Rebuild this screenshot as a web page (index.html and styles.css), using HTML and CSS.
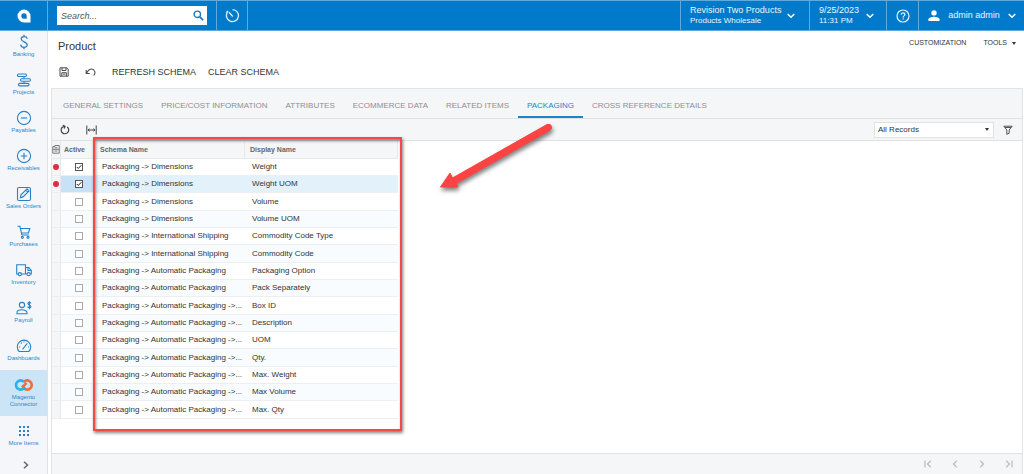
FILE: index.html
```html
<!DOCTYPE html>
<html lang="en">
<head>
<meta charset="utf-8">
<title>Product</title>
<link rel="stylesheet" href="styles.css">
</head>
<body>
<div class="app">
  <header class="topbar">
    <a class="brand" href="#" aria-label="Home"><svg width="14" height="14" viewBox="0 0 14 14"><path fill="#fff" fill-rule="evenodd" d="M7 .5a6.500 6.500 0 0 1 6.500 6.500v6.500H7A6.500 6.500 0 0 1 7 .5zM7 4.300a2.700 2.700 0 1 0 0 5.400h2.700V7A2.700 2.700 0 0 0 7 4.300z"/></svg></a>
    <div class="search-area">
      <label class="search"><input type="text" placeholder="Search..." aria-label="Search"><svg width="11" height="11" viewBox="0 0 11 11" fill="none" stroke="#1479c8"><circle cx="4.300" cy="4.300" r="3.200" stroke-width="1.400"/><path d="M6.800 6.800l3.300 3.300" stroke-width="1.700"/></svg></label>
    </div>
    <button class="history" aria-label="History"><svg width="15" height="15" viewBox="0 0 15 15" fill="none" stroke="#d9f0ff" stroke-width="1.300"><path d="M7.500 1.600A6 6 0 1 1 2.500 4.200M7.800 8.500L4 4.300M1.200 4.600l2-1.600"/></svg></button>
    <button class="tenant"><span class="lines"><span class="big">Revision Two Products</span><span class="small">Products Wholesale</span></span><svg class="chev" width="8" height="6" viewBox="0 0 8 6"><path d="M.7 1l3.300 3.300L7.300 1"/></svg></button>
    <button class="date"><span class="lines"><span class="big">9/25/2023</span><span class="small">11:31 PM</span></span><svg class="chev" width="8" height="6" viewBox="0 0 8 6"><path d="M.7 1l3.300 3.300L7.300 1"/></svg></button>
    <button class="help" aria-label="Help"><svg width="14" height="14" viewBox="0 0 14 14" fill="none" stroke="#e8f6ff" stroke-width="1.200"><circle cx="7" cy="7" r="6"/><path d="M5.200 5.700c0-2.500 3.700-2.400 3.700-.2 0 1.400-1.800 1.400-1.800 2.900M7.100 9.300v1.300"/></svg></button>
    <button class="user"><svg width="12" height="11" viewBox="0 0 12 11" fill="#fff"><circle cx="6" cy="2.900" r="2.700"/><path d="M.4 11V9.500C.4 7.500 4 6.700 6 6.700s5.600.8 5.600 2.800V11z"/></svg><span class="big">admin admin</span><svg class="chev" width="8" height="6" viewBox="0 0 8 6"><path d="M.7 1l3.300 3.300L7.300 1"/></svg></button>
  </header>
  <div class="body">
    <nav class="sidebar">
      <a href="#"><svg viewBox="0 0 16 16"><path d="M11 4.700C11 1.800 5.200 1.800 5.200 4.900c0 3.200 6 2.600 6 6 0 3.300-6.400 3.200-6.400-.1M8 .8v2M8 13.300v2" stroke-width="1.300"/></svg>Banking</a>
      <a href="#"><svg viewBox="0 0 16 16"><rect x="1.500" y="2" width="9" height="2.500" rx="1.200"/><rect x="4.500" y="6.700" width="10" height="2.500" rx="1.200"/><rect x="2.500" y="11.400" width="10.500" height="2.500" rx="1.200"/><path d="M8 4.500v2.200M8 9.200v2.200"/></svg>Projects</a>
      <a href="#"><svg viewBox="0 0 16 16"><circle cx="8" cy="8" r="6.600"/><path d="M4.800 8h6.400"/></svg>Payables</a>
      <a href="#"><svg viewBox="0 0 16 16"><circle cx="8" cy="8" r="6.600"/><path d="M4.800 8h6.400M8 4.800v6.400"/></svg>Receivables</a>
      <a href="#"><svg viewBox="0 0 16 16"><rect x="1.500" y="1.500" width="13" height="13" rx="1.500"/><path d="M4.300 11.700l.7-2.800 6-6 2 2-6 6zM9.700 4.200l2 2"/></svg>Sales Orders</a>
      <a href="#"><svg viewBox="0 0 16 16"><path d="M1.500 2.300h2.400l2 8.700h7M4.500 4.500h9.300l-1.400 4.500H5.500"/><circle cx="6.400" cy="13.200" r="1"/><circle cx="12" cy="13.200" r="1"/></svg>Purchases</a>
      <a href="#"><svg viewBox="0 0 16 16"><path d="M2.200 12H.7V2.800h8.800V12H5.600M9.500 5.500h3.300l2.500 3V12h-1M9.500 12h1.300M12 5.700v2.800h3"/><circle cx="3.900" cy="12.200" r="1.600"/><circle cx="12.600" cy="12.200" r="1.600"/></svg>Inventory</a>
      <a href="#"><svg viewBox="0 0 16 16"><circle cx="6" cy="5" r="2.600"/><path d="M1 13.700v-1.200C1 10.600 3.800 9.800 6 9.800s5 .8 5 2.700v1.200zM14.800 3.500c0-1.500-2.900-1.500-2.900.1 0 1.700 3 1.100 3 3 0 1.600-3.200 1.600-3.200-.1M13.400 1.300v7.900"/></svg>Payroll</a>
      <a href="#" class="last"><svg viewBox="0 0 16 16"><path d="M3.200 13.500A6.700 6.700 0 1 1 12.800 13.500z"/><path d="M6.500 11.300l4.800-6M3 9h1.200M5 4.700l.8.800M8 3.400v1.200M12 9h1"/></svg>Dashboards</a>
      <a href="#" class="current"><svg class="loops" viewBox="0 0 20 14"><path stroke="#f26b3a" d="M9.500 9.600l1.600 1.500a4.600 4.600 0 1 0 0-8.200L9.800 4.100"/><path stroke="#25b5e8" d="M10 4L8.900 3A4.600 4.600 0 1 0 8.900 11L11 9"/><path stroke="#f26b3a" d="M8 9.500l4.500-4.700"/></svg>Magento<br>Connector</a>
      <a href="#" class="more"><svg viewBox="0 0 16 16"><path stroke-width="2" d="M3 4h2M7 4h2M11 4h2M3 8h2M7 8h2M11 8h2M3 12h2M7 12h2M11 12h2"/></svg>More Items</a>
      <button class="expand" aria-label="Expand menu"><svg width="6" height="8" viewBox="0 0 6 8"><path d="M1 .8L4.500 4 1 7.200"/></svg></button>
    </nav>
    <main class="content">
      <div class="title-row"><h1>Product</h1><div class="links"><button>CUSTOMIZATION</button><button>TOOLS<span class="caret"></span></button></div></div>
      <div class="actions">
        <div class="icons">
          <button aria-label="Save"><svg width="10" height="10" viewBox="0 0 10 10" fill="none" stroke="#4c4c4c"><path d="M1 .8h6.800L9.200 2v7.200H1zM3 .8v2.700h4V.8M2.800 9V5.700h4.600V9M4 7.200h2.300"/></svg></button>
          <button aria-label="Undo"><svg width="11" height="10" viewBox="0 0 11 10" fill="none" stroke="#4c4c4c" stroke-width="1.100"><path d="M1.200 3v3.500h3.600M1.500 6.200C3.500 2.600 5 2 6.500 2 9.800 2 11 6 8.700 8.500"/></svg></button>
        </div>
        <button>REFRESH SCHEMA</button>
        <button>CLEAR SCHEMA</button>
      </div>
      <section class="panel">
        <div class="tabs" role="tablist">
          <button role="tab">GENERAL SETTINGS</button><button role="tab">PRICE/COST INFORMATION</button><button role="tab">ATTRIBUTES</button><button role="tab">ECOMMERCE DATA</button><button role="tab">RELATED ITEMS</button><button role="tab" class="selected" aria-selected="true">PACKAGING</button><button role="tab">CROSS REFERENCE DETAILS</button>
        </div>
        <div class="toolbar">
          <button aria-label="Refresh"><svg width="10" height="11" viewBox="0 0 10 11" fill="none" stroke="#444" stroke-width="1.200"><path d="M7.200 2.900A3.800 3.800 0 1 1 2.300 3.200L4.800 2.200M2.800 1.200l2.200 1-.8 2.300"/></svg></button>
          <button aria-label="Fit to width"><svg width="11" height="10" viewBox="0 0 11 10" fill="none" stroke="#444"><path d="M.8.500v9M10.200.500v9M2 5h7M3.500 3.600L2 5l1.500 1.400M7.500 3.600L9 5 7.500 6.400"/></svg></button>
          <div class="select"><select aria-label="Filter"><option>All Records</option></select><span class="caret"></span></div>
          <button aria-label="Filter settings"><svg width="10" height="10" viewBox="0 0 10 10" fill="none" stroke="#555"><path d="M.8 1.200h8.400L6.200 5v3.300l-2.400 1V5zM2 2.500h6"/></svg></button>
        </div>
        <div class="grid">
          <table>
            <colgroup><col class="c-note"><col class="c-active"><col class="c-name"><col class="c-display"></colgroup>
            <thead><tr><th class="note" aria-label="Notes"><svg width="8" height="9" viewBox="0 0 8 9" fill="none" stroke="#777"><path d="M.8 8.200V1.500h2v-1h4.400v7.700zM.8 4.300h6.400M2.500 2.700h3M2.500 6h3"/></svg></th><th class="act">Active</th><th>Schema Name</th><th>Display Name</th></tr></thead>
            <tbody>
              <tr><td class="note"><i class="dot"></i></td><td class="act"><input type="checkbox" checked aria-label="Weight"></td><td>Packaging -&gt; Dimensions</td><td>Weight</td></tr>
              <tr class="active"><td class="note"><i class="dot"></i></td><td class="act"><input type="checkbox" checked aria-label="Weight UOM"></td><td>Packaging -&gt; Dimensions</td><td>Weight UOM</td></tr>
              <tr><td class="note"></td><td class="act"><input type="checkbox" aria-label="Volume"></td><td>Packaging -&gt; Dimensions</td><td>Volume</td></tr>
              <tr><td class="note"></td><td class="act"><input type="checkbox" aria-label="Volume UOM"></td><td>Packaging -&gt; Dimensions</td><td>Volume UOM</td></tr>
              <tr><td class="note"></td><td class="act"><input type="checkbox" aria-label="Commodity Code Type"></td><td>Packaging -&gt; International Shipping</td><td>Commodity Code Type</td></tr>
              <tr><td class="note"></td><td class="act"><input type="checkbox" aria-label="Commodity Code"></td><td>Packaging -&gt; International Shipping</td><td>Commodity Code</td></tr>
              <tr><td class="note"></td><td class="act"><input type="checkbox" aria-label="Packaging Option"></td><td>Packaging -&gt; Automatic Packaging</td><td>Packaging Option</td></tr>
              <tr><td class="note"></td><td class="act"><input type="checkbox" aria-label="Pack Separately"></td><td>Packaging -&gt; Automatic Packaging</td><td>Pack Separately</td></tr>
              <tr><td class="note"></td><td class="act"><input type="checkbox" aria-label="Box ID"></td><td>Packaging -&gt; Automatic Packaging -&gt;...</td><td>Box ID</td></tr>
              <tr><td class="note"></td><td class="act"><input type="checkbox" aria-label="Description"></td><td>Packaging -&gt; Automatic Packaging -&gt;...</td><td>Description</td></tr>
              <tr><td class="note"></td><td class="act"><input type="checkbox" aria-label="UOM"></td><td>Packaging -&gt; Automatic Packaging -&gt;...</td><td>UOM</td></tr>
              <tr><td class="note"></td><td class="act"><input type="checkbox" aria-label="Qty."></td><td>Packaging -&gt; Automatic Packaging -&gt;...</td><td>Qty.</td></tr>
              <tr><td class="note"></td><td class="act"><input type="checkbox" aria-label="Max. Weight"></td><td>Packaging -&gt; Automatic Packaging -&gt;...</td><td>Max. Weight</td></tr>
              <tr><td class="note"></td><td class="act"><input type="checkbox" aria-label="Max Volume"></td><td>Packaging -&gt; Automatic Packaging -&gt;...</td><td>Max Volume</td></tr>
              <tr><td class="note"></td><td class="act"><input type="checkbox" aria-label="Max. Qty"></td><td>Packaging -&gt; Automatic Packaging -&gt;...</td><td>Max. Qty</td></tr>
            </tbody>
          </table>
          <div class="callout"></div>
          <svg class="arrow" width="130" height="80" viewBox="0 0 130 80"><path fill="#fb4343" stroke="#fb4343" stroke-width="1" stroke-linejoin="round" d="M9.500 66L19 52l2.500 5L116 3.500q4-1 4.500 2t-2 4L25 62.500l2 3.500z"/></svg>
        </div>
        <footer class="pager">
          <button aria-label="First page"><svg width="8" height="8" viewBox="0 0 8 8"><path d="M1 .5v7M6.800.8L3.500 4l3.300 3.200"/></svg></button>
          <button aria-label="Previous page"><svg width="8" height="8" viewBox="0 0 8 8"><path d="M5.700.8L2.400 4l3.300 3.200"/></svg></button>
          <button aria-label="Next page"><svg width="8" height="8" viewBox="0 0 8 8"><path d="M2.300.8L5.600 4 2.300 7.200"/></svg></button>
          <button aria-label="Last page"><svg width="8" height="8" viewBox="0 0 8 8"><path d="M7 .5v7M1.200.8L4.500 4 1.200 7.200"/></svg></button>
        </footer>
      </section>
    </main>
  </div>
</div>
</body>
</html>
```

FILE: styles.css
```css
* { box-sizing: border-box; }
body { margin: 0; font: 8px/12px "Liberation Sans", Arial, sans-serif; color: #333; background: #fff; }
button, select, input { font: inherit; color: inherit; margin: 0; }
button { border: 0; padding: 0; background: none; white-space: nowrap; cursor: pointer; }
a { text-decoration: none; }
svg { display: block; flex: none; }
.app { display: flex; flex-direction: column; min-height: 100vh; }

.topbar { display: flex; height: 31px; background: #027acc; border-top: 1px solid #5eabdf; border-bottom: 1px solid #5eabdf; color: #e8f6ff; }
.brand { display: flex; align-items: center; justify-content: center; width: 48px; border-right: 1px solid #5eabdf; }
.search-area { display: flex; align-items: center; flex: none; width: 169px; padding-left: 9px; border-right: 1px solid #5eabdf; }
.search { display: flex; align-items: center; width: 150px; height: 19px; padding: 0 3px 0 4px; background: #fff; }
.search input { flex: 1; min-width: 0; padding: 0; border: 0; outline: 0; background: none; font-size: 9px; color: #333; }
.search input::placeholder { color: #555; font-style: italic; opacity: 1; }
.history { display: flex; align-items: center; justify-content: center; width: 31px; border-right: 1px solid #5eabdf; }
.tenant, .date, .help, .user { display: flex; align-items: center; border-left: 1px solid #5eabdf; }
.tenant { width: 129px; margin-left: auto; padding: 0 14px 0 9px; justify-content: space-between; text-align: left; }
.date { width: 77px; padding: 0 12px 0 9px; justify-content: space-between; text-align: left; }
.help { width: 32px; justify-content: center; }
.user { width: 106px; padding: 0 8px 0 9px; justify-content: space-between; }
.lines { display: flex; flex-direction: column; }
.big { font-size: 9px; line-height: 11px; }
.small { font-size: 8px; line-height: 10px; }
.chev { fill: none; stroke: #fff; stroke-width: 1.5; }

.body { display: flex; flex: 1; }
.sidebar { display: flex; flex-direction: column; flex: none; width: 48px; padding-top: 1px; background: #f4f6f9; border-right: 1px solid #dfe3e7; }
.sidebar a { display: flex; flex-direction: column; align-items: center; height: 38px; padding-top: 2px; font-size: 6px; line-height: 7px; text-align: center; color: #2688cf; }
.sidebar svg { width: 16px; height: 16px; margin-bottom: 1px; fill: none; stroke: #2681c8; stroke-width: 1.1; }
.sidebar .last { height: 34px; }
.sidebar .current { height: 46px; padding-top: 8px; background: #cbe5f6; }
.sidebar .loops { width: 20px; height: 14px; margin-bottom: 2px; stroke-width: 2.6; }
.sidebar .more { padding-top: 7px; }
.sidebar .expand { display: flex; align-items: center; justify-content: center; height: 16px; margin-top: 3px; padding-left: 4px; }
.sidebar .expand svg { width: 6px; height: 8px; margin: 0; stroke: #666; stroke-width: 1.5; }

.content { display: flex; flex: 1; flex-direction: column; min-width: 0; padding-left: 3px; }
.title-row { display: flex; justify-content: space-between; align-items: flex-start; height: 30px; padding: 6px 8px 0 7px; }
h1 { margin: 2px 0 0; font-size: 11px; line-height: 14px; font-weight: 400; }
.links { display: flex; gap: 17px; font-size: 7px; }
.links button { display: flex; align-items: center; }
.caret { display: inline-block; border: 2px solid transparent; border-top: 3px solid #333; border-bottom: 0; }
.links .caret { margin-left: 5px; }
.actions { display: flex; align-items: center; height: 27px; padding: 0 0 5px 8px; gap: 12px; font-size: 9px; }
.icons { display: flex; gap: 16px; margin-right: 4px; }

.panel { display: flex; flex: 1; flex-direction: column; margin-right: 1px; border: 1px solid #e2e4e7; border-bottom: 0; }
.tabs { display: flex; height: 30px; padding-left: 2px; background: #f4f6f8; border-bottom: 1px solid #dfe2e5; color: #8d8f91; }
.tabs button { padding: 7px 9px 0; border-bottom: 2px solid transparent; }
.tabs .selected { color: #1c83cd; border-bottom-color: #1c83cd; }
.toolbar { display: flex; align-items: center; height: 22px; padding: 0 9px 0 8px; gap: 16px; background: #f4f6f8; border-bottom: 1px solid #dfe2e5; }
.select { display: flex; align-items: center; width: 120px; height: 16px; margin-left: auto; padding: 0 4px 0 3px; background: #fff; border: 1px solid #dfe2e5; }
.toolbar > button:last-child { margin-left: -7px; }
.select select { flex: 1; min-width: 0; padding: 0; border: 0; outline: 0; background: none; appearance: none; }
.grid { position: relative; flex: 1; }
table { table-layout: fixed; width: 346px; border-collapse: separate; border-spacing: 0; }
.c-note { width: 9px; }
.c-active { width: 34px; }
.c-name { width: 150px; }
th { height: 18px; padding: 0 3px 0 5px; font-size: 7px; line-height: 10px; text-align: left; color: #666; background: #f4f6f8; border-right: 1px solid #e6e9ec; border-bottom: 1px solid #e6e9ec; }
td { height: 17px; padding: 0 3px 0 7px; line-height: 10px; white-space: nowrap; overflow: hidden; border-bottom: 1px solid #eceff2; }
tr:nth-child(3n) td { height: 18px; }
tr:nth-child(even) td { background: #f8fcfe; }
tbody .note, tr:nth-child(even) .note { background: #f4f6f8; }
tr .note { padding: 0; border-right: 1px solid #e6e9ec; }
.act { padding: 0 0 0 3px; }
td.act { padding: 0 0 0 1px; }
tbody .active td { background: #e3f1fa; }
tbody .active .act { background: #c7e2f4; }
tbody .active .note { background: #f4f6f8; }
.dot { display: block; width: 6px; height: 6px; margin-left: 1px; border-radius: 3px; background: #dc2f42; }
input[type="checkbox"] { display: block; width: 8px; height: 8px; margin: 0 auto; appearance: none; border: 1px solid #aaa; background: #fff; }
input[type="checkbox"]:checked { border-color: #555; background: #fff url("data:image/svg+xml,%3Csvg xmlns='http://www.w3.org/2000/svg' viewBox='0 0 6 6'%3E%3Cpath d='M.8 3l1.500 1.500L5.300 1.200' fill='none' stroke='%23222'/%3E%3C/svg%3E"); }
.callout { position: absolute; left: 41px; top: -4px; width: 309px; height: 294px; border: 2px solid #f54848; box-shadow: 1px 2px 3px rgba(0,0,0,.5), inset 1px 2px 3px rgba(0,0,0,.45); pointer-events: none; }
.arrow { position: absolute; left: 379px; top: -20px; filter: drop-shadow(1px 3px 2px rgba(0,0,0,.5)); pointer-events: none; }
.pager { display: flex; align-items: center; justify-content: flex-end; height: 21px; padding-right: 9px; gap: 19px; background: #f4f6f8; border-top: 1px solid #dfe2e5; }
.pager svg { fill: none; stroke: #b9bcbf; stroke-width: 1.2; }
```
